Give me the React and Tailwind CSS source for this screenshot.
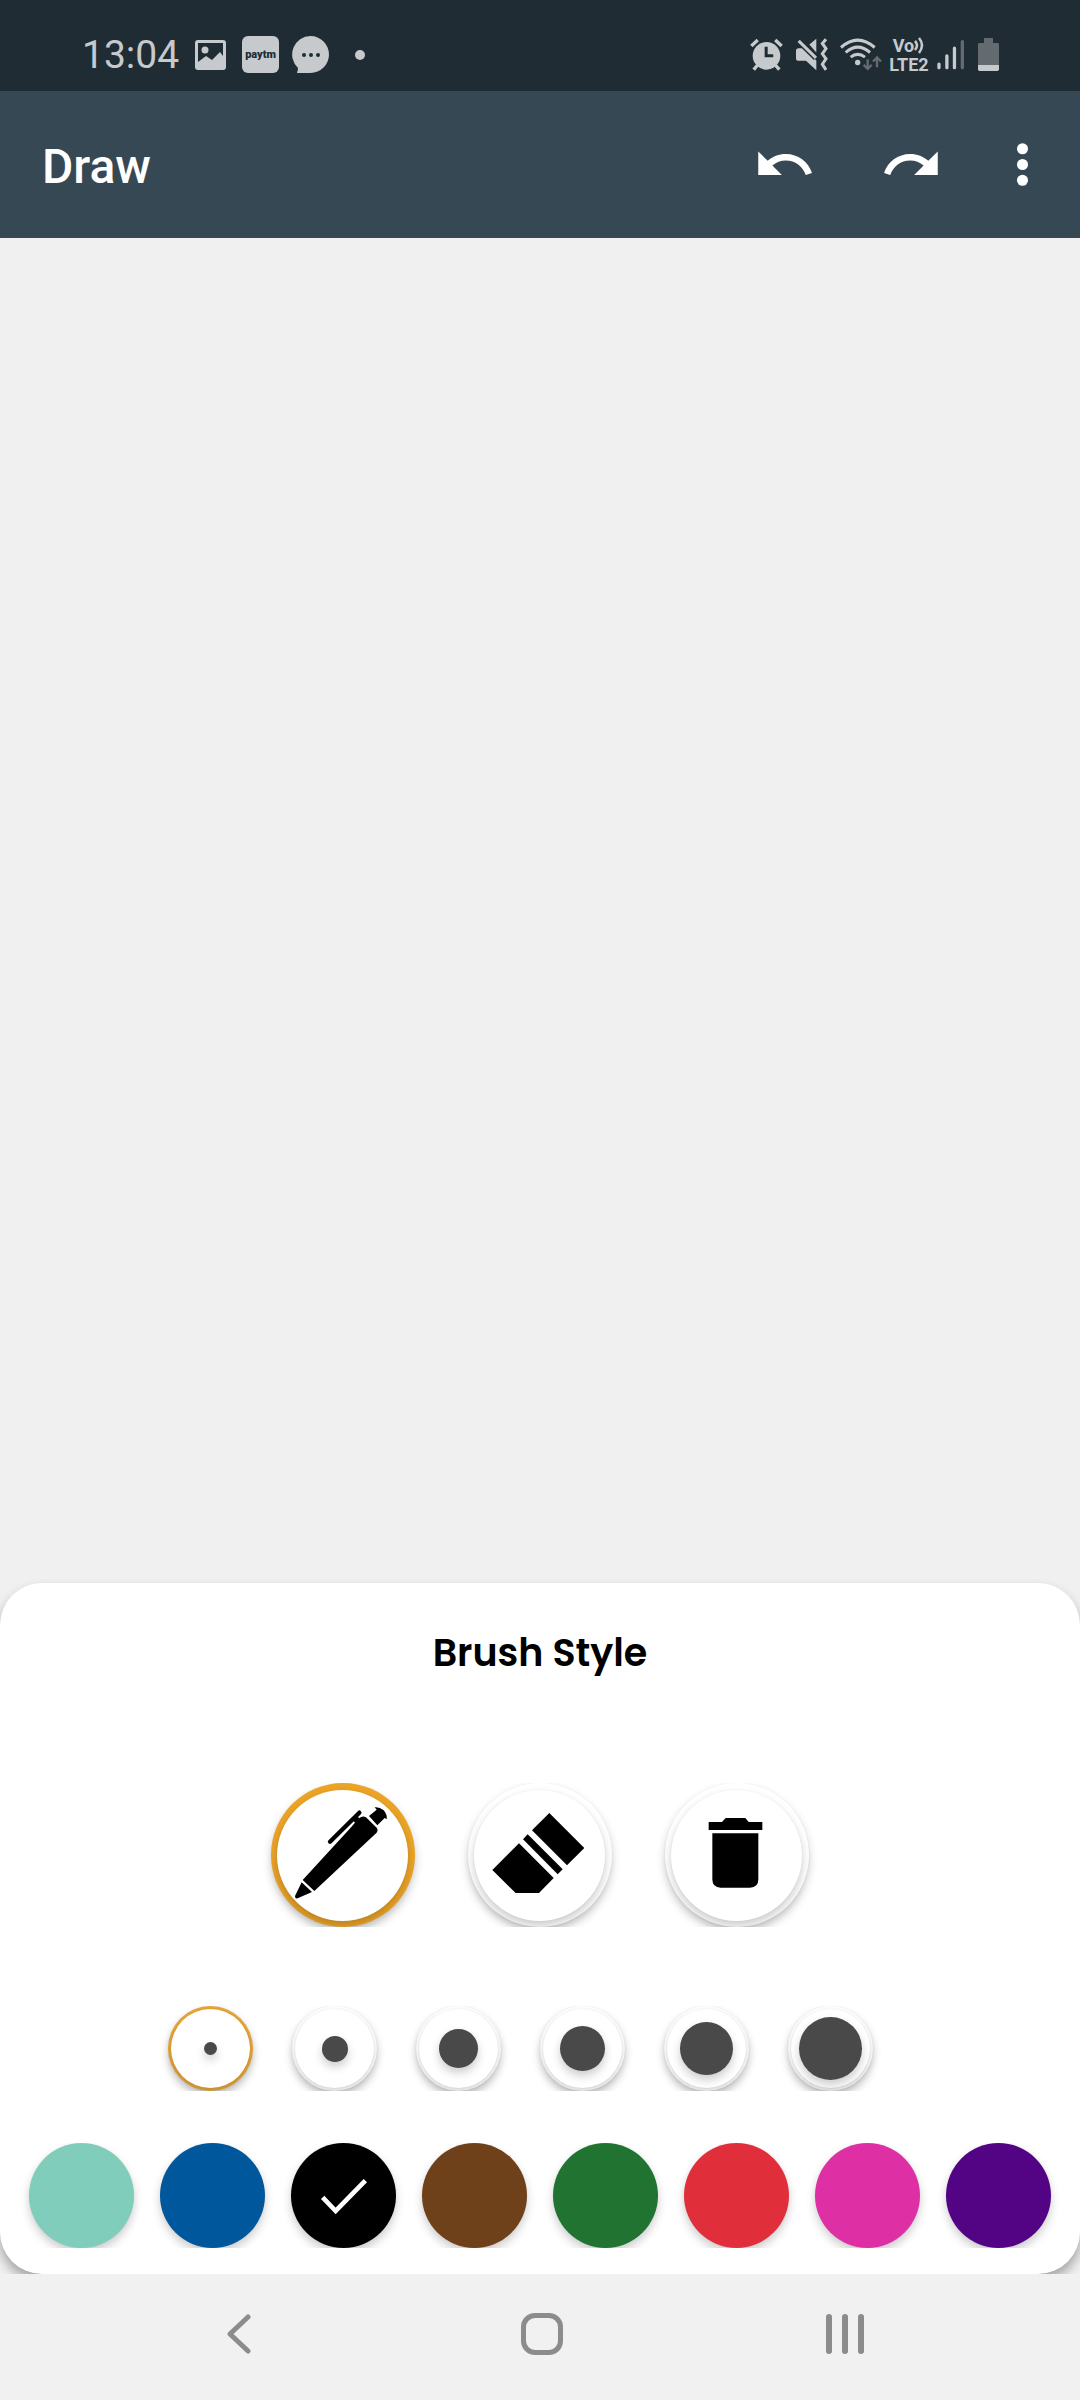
import { useState } from "react";

const TOOLS = [
  { id: "pen", label: "Pen" },
  { id: "eraser", label: "Eraser" },
  { id: "clear", label: "Clear" },
];

const SIZES = [13, 26, 39, 45, 53, 63];

const COLORS = [
  { name: "Mint", className: "bg-[#80cdbb]" },
  { name: "Blue", className: "bg-[#01579b]" },
  { name: "Black", className: "bg-black" },
  { name: "Brown", className: "bg-[#6f411b]" },
  { name: "Green", className: "bg-[#207331]" },
  { name: "Red", className: "bg-[#e02f3b]" },
  { name: "Pink", className: "bg-[#de2fa4]" },
  { name: "Purple", className: "bg-[#520485]" },
];

function ToolIcon({ id }) {
  if (id === "pen") {
    return (
      <svg viewBox="63 69 432 432" className="size-36" aria-hidden="true">
        <path d="M158 360 L302 203 Q316 186 328 174 Q338 166 348 172 L380 203 Q386 210 379 219 L193 393 Z" />
        <path d="M328 158 L240 245" fill="none" stroke="#000" strokeWidth="13" strokeLinecap="round" />
        <path d="M306 177 L320 164 L328 176 L316 190 Z" />
        <path d="M357 168 L380 149 L374 142 Q388 140 401 151 Q412 163 410 178 L404 174 L382 196 Z" />
        <path d="M155 367 L186 396 L143 415 Q134 417 135 408 Z" />
      </svg>
    );
  }
  if (id === "eraser") {
    return (
      <svg viewBox="53 69 432 432" className="size-36" aria-hidden="true">
        <path d="M297 159 L402 264 L350 316 L245 211 Z" />
        <path d="M232 223 L337 328 L322 343 L218 238 Z" />
        <path d="M206 250 L310 354 L266 399 L196 399 L126 330 Z" />
      </svg>
    );
  }
  return (
    <svg viewBox="644 69 432 432" className="size-36" aria-hidden="true">
      <path d="M775 186 H815 L826 174 H885 L895 186 H936 V210 H775 Z" />
      <path d="M786 220 H924 V358 Q924 383 899 383 H811 Q786 383 786 358 Z" />
    </svg>
  );
}

function StatusBar() {
  return (
    <div className="flex h-[91px] items-center bg-[#202c34] pr-[81px] pl-[82px] pt-[18px] text-[#c6cacd]">
      <div className="flex flex-1 items-center">
        <span className="text-[39px] leading-10">13:04</span>
        <svg viewBox="0 0 31 30" className="ml-4 h-[30px] w-[31px]" fill="currentColor" aria-hidden="true">
          <path
            fillRule="evenodd"
            d="M3 0 H28 Q31 0 31 3 V27 Q31 30 28 30 H3 Q0 30 0 27 V3 Q0 0 3 0 Z M3 3 V22 L11 16 L17 20 L25 12 L28 16 V3 Z"
          />
          <circle cx="10" cy="10" r="3.5" />
        </svg>
        <span className="ml-4 flex size-[37px] items-center justify-center rounded-md bg-[#c6cacd] text-[11px] leading-none font-black text-[#202c34]">
          paytm
        </span>
        <svg viewBox="0 0 37 37" className="ml-[13px] size-[37px]" aria-hidden="true">
          <path d="M18.500 0 A18.500 18.500 0 1 1 18.500 37 H5 Q6 34 6 32 A18.500 18.500 0 0 1 18.500 0 Z" fill="currentColor" />
          <g fill="#202c34">
            <circle cx="12" cy="19" r="2" />
            <circle cx="19" cy="19" r="2" />
            <circle cx="26" cy="19" r="2" />
          </g>
        </svg>
        <span className="ml-[26px] size-[10px] rounded-full bg-[#c6cacd]" />
      </div>

      <svg viewBox="32 51 98 98" className="size-[33px]" aria-hidden="true">
        <circle cx="81" cy="104" r="41" fill="currentColor" />
        <g stroke="currentColor" strokeWidth="10">
          <path d="M36 75 L55 57 M107 57 L126 75" />
          <path d="M54 132 L43 145 M108 132 L119 145" />
        </g>
        <path d="M80 77 V104 H101" fill="none" stroke="#202c34" strokeWidth="9" />
      </svg>
      <svg viewBox="168 51 96 98" className="ml-[13px] h-[33px] w-8" aria-hidden="true">
        <path d="M208 70 L229 53 V94 Z" fill="currentColor" />
        <path d="M176 81 H192 L229 118 V147 L198 119 H176 Q168 119 168 111 V89 Q168 81 176 81 Z" fill="currentColor" />
        <path d="M176 59 L228 110" stroke="#202c34" strokeWidth="18" />
        <path d="M176 59 L228 110" stroke="currentColor" strokeWidth="9" />
        <path d="M258 54 L247 67 L258 82 L247 98 L258 113 L247 129 L258 146" fill="none" stroke="currentColor" strokeWidth="9" />
      </svg>
      <svg viewBox="299 51 126 98" className="ml-3 h-[33px] w-[42px]" aria-hidden="true">
        <g fill="none" stroke="currentColor" strokeWidth="9">
          <path d="M302 79 Q352 35 403 79" />
          <path d="M316 94 Q352 62 389 94" />
          <path d="M331 108 Q352 91 374 108" />
        </g>
        <circle cx="352" cy="124" r="8" fill="currentColor" />
        <g fill="none" stroke="#636b71" strokeWidth="7">
          <path d="M382 114 V143 M370 131 L382 143 L394 131" />
          <path d="M410 138 V110 M398 121 L410 109 L422 121" />
        </g>
      </svg>
      <span className="ml-[7px] flex w-10 flex-col items-center text-[18px] leading-[19px] font-bold">
        <span className="flex items-center">
          Vo
          <svg viewBox="0 0 11 17" className="h-[17px] w-[11px]" fill="none" stroke="currentColor" strokeWidth="2.500" aria-hidden="true">
            <path d="M1 4 Q5 8 1 13 M5 1 Q11 8 5 16" />
          </svg>
        </span>
        <span>LTE2</span>
      </span>
      <svg viewBox="590 57 82 92" className="ml-2 h-[31px] w-[27px]" strokeWidth="10" strokeLinecap="round" aria-hidden="true">
        <path d="M596 132 V143 M620 107 V143 M643 84 V143" stroke="currentColor" />
        <path d="M667 64 V143" stroke="#636b71" />
      </svg>
      <svg viewBox="714 51 63 99" className="ml-[14px] h-[33px] w-[21px]" aria-hidden="true">
        <path d="M732 51 H759 V66 H773 Q777 66 777 70 V132 H714 V70 Q714 66 718 66 H732 Z" fill="#636b71" />
        <path d="M714 132 H777 V145 Q777 150 772 150 H719 Q714 150 714 145 Z" fill="currentColor" />
      </svg>
    </div>
  );
}

function AppBar() {
  return (
    <header className="flex h-[147px] items-center bg-[#364854] pr-[26px] pl-[42px] text-white">
      <h1 className="flex-1 pt-1 text-[48px] leading-[56px] font-medium">Draw</h1>
      <button type="button" aria-label="Undo">
        <svg viewBox="0 0 24 24" className="size-[63px]" fill="currentColor" aria-hidden="true">
          <path d="M12.5 8c-2.650 0-5.050.990-6.900 2.600L2 7v9h9l-3.620-3.620c1.390-1.160 3.160-1.880 5.120-1.880 3.540 0 6.550 2.310 7.600 5.500l2.370-.780C21.080 11.030 17.150 8 12.500 8z" />
        </svg>
      </button>
      <button type="button" aria-label="Redo" className="ml-16">
        <svg viewBox="0 0 24 24" className="size-[63px]" fill="currentColor" aria-hidden="true">
          <path d="M18.400 10.600C16.550 8.990 14.150 8 11.500 8c-4.650 0-8.580 3.030-9.960 7.220L3.900 16c1.050-3.190 4.050-5.500 7.600-5.500 1.950 0 3.730.720 5.120 1.880L13 16h9V7l-3.600 3.600z" />
        </svg>
      </button>
      <button type="button" aria-label="More options" className="ml-12">
        <svg viewBox="0 0 24 24" className="size-[63px]" fill="currentColor" aria-hidden="true">
          <circle cx="12" cy="6" r="2.100" />
          <circle cx="12" cy="12" r="2.100" />
          <circle cx="12" cy="18" r="2.100" />
        </svg>
      </button>
    </header>
  );
}

function BrushSheet() {
  const [tool, setTool] = useState("pen");
  const [size, setSize] = useState(13);
  const [color, setColor] = useState("Black");

  return (
    <section className="rounded-[42px] bg-white pt-[50px] pb-[26px] shadow-[0_7px_12px_rgba(0,0,0,0.32)]">
      <h2 className="text-center font-[Poppins,Inter,sans-serif] text-[38px] leading-10 font-semibold text-black">
        Brush Style
      </h2>

      <div className="mt-[110px] flex justify-center gap-[53px] [clip-path:inset(0)]">
        {TOOLS.map(({ id, label }) => (
          <button
            key={id}
            type="button"
            aria-label={label}
            aria-pressed={tool === id}
            onClick={() => setTool(id)}
            className={`relative size-36 rounded-full p-1.5 shadow-[0_5px_10px_rgba(0,0,0,0.2),0_0_2px_rgba(0,0,0,0.06)] ${
              tool === id ? "bg-[#eca427]" : "bg-white"
            }`}
          >
            <span className="block size-[131px] rounded-full bg-white shadow-[0_5px_10px_rgba(0,0,0,0.2),0_0_2px_rgba(0,0,0,0.06)]" />
            <span className="absolute inset-0">
              <ToolIcon id={id} />
            </span>
          </button>
        ))}
      </div>

      <div className="mt-[79px] flex justify-center gap-[39px] pr-[39px] [clip-path:inset(0)]">
        {SIZES.map((px) => (
          <button
            key={px}
            type="button"
            aria-label={`Brush size ${px}`}
            aria-pressed={size === px}
            onClick={() => setSize(px)}
            className={`size-[85px] rounded-full p-[3px] shadow-[0_5px_10px_rgba(0,0,0,0.2),0_0_2px_rgba(0,0,0,0.06)] ${
              size === px ? "bg-[#e8a638]" : "bg-white"
            }`}
          >
            <span className="flex size-[79px] items-center justify-center rounded-full bg-white shadow-[0_4px_8px_rgba(0,0,0,0.16),0_0_2px_rgba(0,0,0,0.06)]">
              <span
                className="rounded-full bg-[#494949] shadow-[0_5px_10px_rgba(0,0,0,0.2)]"
                style={{ width: px, height: px }}
              />
            </span>
          </button>
        ))}
      </div>

      <div className="mt-[52px] flex justify-between px-[29px] [clip-path:inset(0)]">
        {COLORS.map(({ name, className }) => (
          <button
            key={name}
            type="button"
            aria-label={name}
            aria-pressed={color === name}
            onClick={() => setColor(name)}
            className={`size-[105px] rounded-full shadow-[0_5px_10px_rgba(0,0,0,0.2),0_0_2px_rgba(0,0,0,0.06)] ${className}`}
          >
            {color === name && (
              <svg viewBox="873 99 315 315" className="size-[105px]" aria-hidden="true">
                <path d="M968 262 L1007 303 L1096 212" fill="none" stroke="#fff" strokeWidth="14" />
              </svg>
            )}
          </button>
        ))}
      </div>
    </section>
  );
}

function NavBar() {
  return (
    <nav className="relative flex h-[126px] items-center bg-[#f1f1f1] pr-[84px] pb-1.5 pl-[87px] text-[#8c8c8c]">
      <button type="button" aria-label="Back" className="flex flex-1 justify-center">
        <svg viewBox="0 0 24 42" className="h-[42px] w-6" fill="none" stroke="currentColor" strokeWidth="5" strokeLinecap="round" strokeLinejoin="round" aria-hidden="true">
          <path d="M21 4 L3 21 L21 38" />
        </svg>
      </button>
      <button type="button" aria-label="Home" className="flex flex-1 justify-center">
        <span className="size-[42px] rounded-[14px] border-5 border-current" />
      </button>
      <button type="button" aria-label="Recent apps" className="flex flex-1 justify-center gap-[10px]">
        <span className="h-10 w-1.5 rounded-full bg-current" />
        <span className="h-10 w-1.5 rounded-full bg-current" />
        <span className="h-10 w-1.5 rounded-full bg-current" />
      </button>
    </nav>
  );
}

export default function App() {
  return (
    <div className="flex min-h-screen flex-col bg-[#f0f0f0] font-[Roboto,sans-serif]">
      <StatusBar />
      <AppBar />
      <main className="flex flex-1 flex-col">
        <div className="flex-1" aria-label="Drawing canvas" />
        <BrushSheet />
      </main>
      <NavBar />
    </div>
  );
}
